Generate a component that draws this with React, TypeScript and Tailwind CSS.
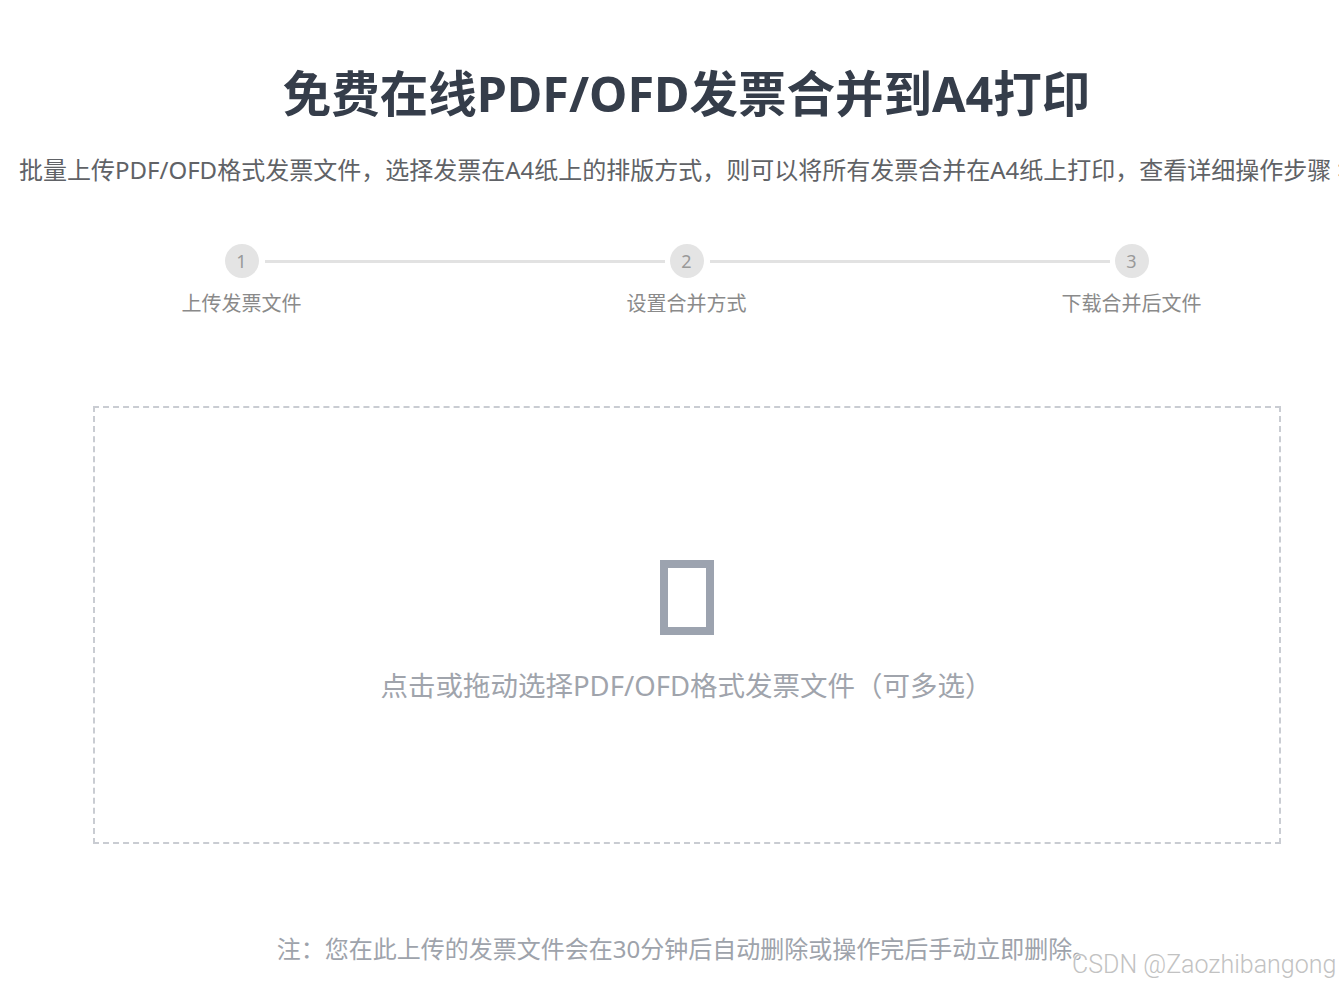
import React from "react";

const font = "font-['Noto_Sans','Noto_Sans_CJK_SC',sans-serif]";

export default function App() {
  const steps = ["上传发票文件", "设置合并方式", "下载合并后文件"];
  return (
    <div className={`relative w-[1339px] h-[987px] overflow-hidden bg-white ${font}`}>
      <div className="ml-[19px] w-[1335px] flex flex-col items-stretch">
        <h1 className="pt-[63px] h-[123px] text-center text-[48.5px] leading-[60px] font-bold text-[#353d4a] whitespace-nowrap">
          免费在线PDF/OFD发票合并到A4打印
        </h1>
        <p className="mt-[31px] text-[24px] leading-[32px] text-[#606266] whitespace-nowrap">
          批量上传PDF/OFD格式发票文件，选择发票在A4纸上的排版方式，则可以将所有发票合并在A4纸上打印，查看详细操作步骤 &gt;&gt;
        </p>
        <div className="mt-[58px] flex items-center justify-center">
          <StepCircle n={1} />
          <div className="ml-[6px] mr-[5px] w-[400px] h-[3px] bg-[#e2e2e2]" />
          <StepCircle n={2} />
          <div className="ml-[6px] mr-[5px] w-[400px] h-[3px] bg-[#e2e2e2]" />
          <StepCircle n={3} />
        </div>
        <div className="mt-[12px] grid grid-cols-3">
          {steps.map((s) => (
            <div key={s} className="text-center text-[20px] leading-[28px] text-[#8a8a8a]">
              {s}
            </div>
          ))}
        </div>
        <div className="mt-[88px] mx-auto w-[1188px] h-[438px] border-2 border-dashed border-[#c9ccd2] flex flex-col items-center">
          <div className="mt-[152px] w-[54px] h-[75px] border-[8px] border-[#9ca3af]" />
          <div className="mt-[33px] text-[27.5px] leading-[36px] text-[#a0a4ac] whitespace-nowrap">
            点击或拖动选择PDF/OFD格式发票文件（可多选）
          </div>
        </div>
        <p className="mt-[89px] text-center text-[24px] leading-[32px] text-[#9ea3ab] whitespace-nowrap">
          注：您在此上传的发票文件会在30分钟后自动删除或操作完后手动立即删除。
        </p>
      </div>
      <div className="absolute left-[1072px] top-[948px] text-[25px] leading-[34px] font-light text-[#c2c2c2] whitespace-nowrap font-['Roboto','Noto_Sans',sans-serif] [text-shadow:0_0_2px_#fff,0_0_2px_#fff]">
        CSDN @Zaozhibangong
      </div>
    </div>
  );
}

function StepCircle({ n }: { n: number }) {
  return (
    <div className="w-[34px] h-[34px] rounded-full bg-[#e4e4e4] flex items-center justify-center text-[18px] leading-none text-[#999999]">
      {n}
    </div>
  );
}
